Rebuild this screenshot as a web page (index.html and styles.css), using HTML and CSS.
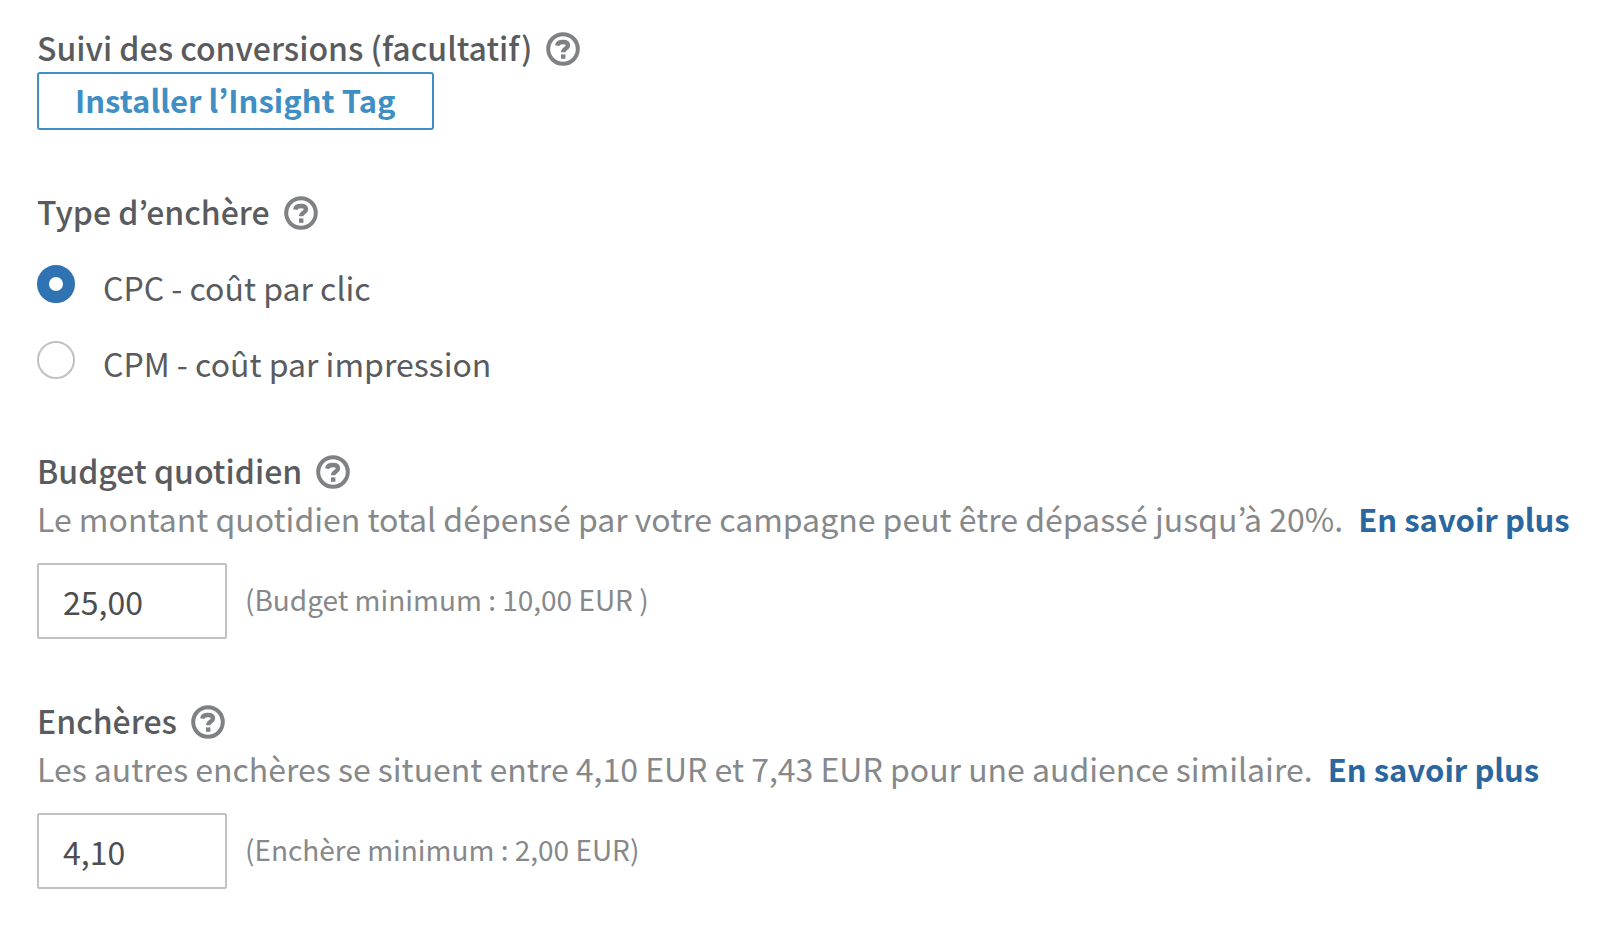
FILE: index.html
```
<!DOCTYPE html>
<html lang="fr">
<head>
<meta charset="utf-8">
<title>Enchères et budget</title>
<link rel="stylesheet" href="styles.css">
</head>
<body>
<svg class="sprite" aria-hidden="true">
  <symbol id="help" viewBox="0 0 34 34">
    <circle cx="17" cy="17" r="14.800" fill="none" stroke="currentColor" stroke-width="4"/>
    <path d="M11.200 13.600C11.600 11 14 10 17 10c3.200 0 5 1.200 5 3.500 0 3-4.800 3-4.800 6.700" fill="none" stroke="currentColor" stroke-width="4.400"/>
    <rect x="15" y="22.400" width="4.400" height="4.400" fill="currentColor"/>
  </symbol>
</svg>
<main class="form">
  <section>
    <h2 class="title">Suivi des conversions (facultatif) <svg class="help"><use href="#help"/></svg></h2>
    <button class="install" type="button">Installer l’Insight Tag</button>
  </section>
  <section>
    <h2 class="title">Type d’enchère <svg class="help"><use href="#help"/></svg></h2>
    <div class="options">
      <label class="option"><input class="radio" type="radio" name="type" checked><span>CPC - coût par clic</span></label>
      <label class="option"><input class="radio" type="radio" name="type"><span>CPM - coût par impression</span></label>
    </div>
  </section>
  <section>
    <h2 class="title"><label for="budget">Budget quotidien</label> <svg class="help"><use href="#help"/></svg></h2>
    <p class="note">Le montant quotidien total dépensé par votre campagne peut être dépassé jusqu’à 20%. <a class="more" href="#">En savoir plus</a></p>
    <div class="field"><input class="amount" id="budget" type="text" value="25,00"><span class="hint">(Budget minimum : 10,00 EUR )</span></div>
  </section>
  <section>
    <h2 class="title"><label for="bid">Enchères</label> <svg class="help"><use href="#help"/></svg></h2>
    <p class="note">Les autres enchères se situent entre 4,10 EUR et 7,43 EUR pour une audience similaire. <a class="more" href="#">En savoir plus</a></p>
    <div class="field"><input class="amount" id="bid" type="text" value="4,10"><span class="hint">(Enchère minimum : 2,00 EUR)</span></div>
  </section>
</main>
</body>
</html>
```
FILE: styles.css
```
* { box-sizing: border-box; }
body {
  margin: 0;
  background: #fff;
  color: #595b5e;
  font: 32px/44px "Noto Sans CJK KR", "Open Sans", sans-serif;
}
.sprite { display: none; }
.form {
  display: flex;
  flex-direction: column;
  gap: 58px;
  padding: 24px 37px;
}
.title {
  display: flex;
  align-items: flex-start;
  gap: 14px;
  margin: 0;
  padding-bottom: 2px;
  font-size: 32px;
  font-weight: 500;
  line-height: 46px;
}
.help { width: 34px; height: 34px; margin-top: 8px; color: #7f8184; }
.install {
  display: block;
  padding: 2px 36px 4px;
  border: 2px solid #3f8fc4;
  border-radius: 3px;
  background: #fff;
  color: #3f8fc4;
  font: 700 31px/48px "Noto Sans CJK KR", "Open Sans", sans-serif;
}
.options { display: flex; flex-direction: column; gap: 32px; padding: 29px 0 4px; }
.option { display: flex; align-items: flex-start; gap: 28px; }
.radio {
  appearance: none;
  width: 38px;
  height: 38px;
  margin: 0;
  border: 2px solid #bfc1c3;
  border-radius: 50%;
  background: #fff;
}
.radio:checked { border: 12px solid #2f73b3; }
.note { margin: 0; color: #86888a; line-height: 46px; white-space: nowrap; }
.more { margin-left: 8px; color: #2a679f; font-size: 31px; font-weight: 700; text-decoration: none; }
.field { display: flex; align-items: center; gap: 18px; margin-top: 21px; }
.amount {
  width: 190px;
  height: 76px;
  padding: 0 24px;
  border: 2px solid #bfc1c3;
  border-radius: 2px;
  color: #4c4e50;
  font: 32px/44px "Noto Sans CJK KR", "Open Sans", sans-serif;
}
.hint { padding-bottom: 4px; color: #86888a; font-size: 28px; }
```
